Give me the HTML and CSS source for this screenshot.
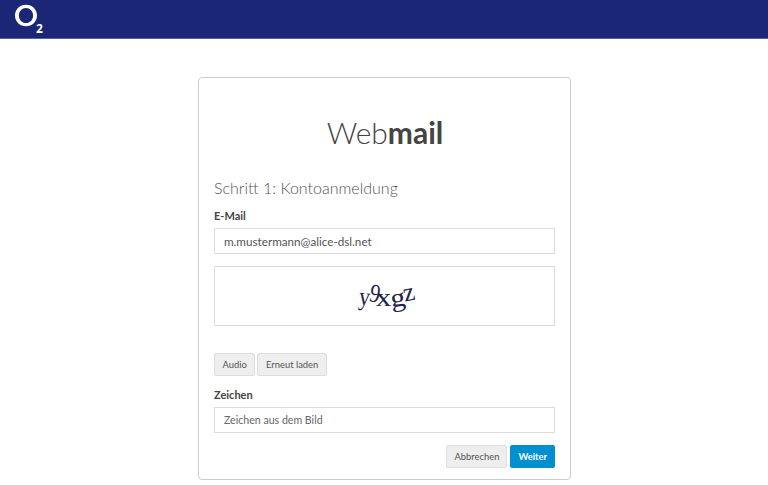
FILE: index.html
```html
<!DOCTYPE html>
<html lang="de">
<head>
<meta charset="utf-8">
<title>Webmail</title>
<link rel="stylesheet" href="styles.css">
</head>
<body>
<header class="topbar">
  <svg class="logo" width="32" height="38" viewBox="0 0 32 38" aria-label="O2">
    <path class="logo-ring" fill-rule="evenodd" d="M12 4.800c6.200 0 11 4.600 11 10.700s-4.800 10.700-11 10.700S1 21.600 1 15.500 5.800 4.800 12 4.800zm0 3.100c-4 0-7.100 3.200-7.100 7.600s3.100 7.600 7.100 7.600 7.100-3.200 7.100-7.600-3.100-7.600-7.100-7.600z"/>
    <text class="logo-2" x="22" y="33">2</text>
  </svg>
</header>
<main class="page">
  <section class="card">
    <h1 class="title">Web<strong>mail</strong></h1>
    <h2 class="step">Schritt 1: Kontoanmeldung</h2>
    <label class="label">E-Mail</label>
    <div class="input">m.mustermann@alice-dsl.net</div>
    <div class="captcha">
      <div class="captcha-text"><span class="c1">y</span><span class="c2">9</span><span class="c3">x</span><span class="c4">g</span><span class="c5">z</span></div>
    </div>
    <div class="captcha-actions">
      <button class="btn wide">Audio</button>
      <button class="btn wide">Erneut laden</button>
    </div>
    <label class="label">Zeichen</label>
    <div class="input placeholder">Zeichen aus dem Bild</div>
    <div class="actions">
      <button class="btn">Abbrechen</button>
      <button class="btn primary">Weiter</button>
    </div>
  </section>
</main>
</body>
</html>
```
FILE: styles.css
```css
* { box-sizing: border-box; }
html, body { margin: 0; padding: 0; }
body {
  background: #fff;
  color: #444;
  font-family: Lato, "Liberation Sans", sans-serif;
  height: 485px;
  overflow: hidden;
}
.topbar {
  height: 39px;
  background: #1c2677;
  border-bottom: 1px solid #5a629c;
  padding-left: 14px;
  display: flex;
  align-items: flex-start;
}
.logo { display: block; }
.logo-ring { fill: #fff; }
.logo-2 {
  fill: #fff;
  font-family: "Open Sans", sans-serif;
  font-weight: 700;
  font-size: 12px;
}
.page { display: flex; justify-content: center; padding-top: 38px; padding-left: 1px; }
.card {
  width: 373px;
  height: 403px;
  border: 1px solid #ccc;
  border-radius: 4px;
  padding: 0 15px;
}
.title {
  margin: 36px 0 0;
  padding-left: 1px;
  text-align: center;
  font-size: 30px;
  line-height: 36px;
  font-weight: 300;
  color: #444;
}
.title strong { font-weight: 700; }
.step {
  margin: 27px 0 9px;
  font-size: 16px;
  line-height: 22px;
  font-weight: 300;
  color: #555;
}
.label {
  display: block;
  margin-top: 8px;
  font-size: 11px;
  line-height: 16px;
  font-weight: 700;
  color: #444;
}
.input {
  margin-top: 4px;
  height: 26px;
  border: 1px solid #ddd;
  padding: 0 9px;
  font-size: 11.7px;
  line-height: 25px;
  color: #555;
}
.placeholder { color: #666; font-size: 10.6px; }
.captcha {
  margin-top: 12px;
  height: 60px;
  border: 1px solid #ddd;
  display: flex;
  align-items: center;
  justify-content: center;
}
.captcha-text {
  display: flex;
  font-family: "Liberation Serif", serif;
  font-size: 26px;
  line-height: 30px;
  color: #23234a;
  transform: translate(2px, 1px);
}
.captcha-text span { display: block; }
.c1 { transform: translate(3px, 0) rotate(6deg) scaleX(.85); }
.c2 { transform: rotate(10deg) translate(0, -3px) scaleX(.8); }
.c3 { transform: translate(-4px, 1px) scaleX(1.2); }
.c4 { transform: rotate(-8deg) translate(-3px, 1px) scaleX(1.15); }
.c5 { transform: rotate(-12deg) translate(-3px, -5px); }
.captcha-actions { margin-top: 27px; display: flex; gap: 2px; }
.captcha-actions + .label { margin-top: 11px; }
.btn {
  font-family: Lato, "Liberation Sans", sans-serif;
  font-size: 9.4px;
  height: 23px;
  padding: 0 7px;
  background: #eee;
  border: 1px solid #ddd;
  border-radius: 2px;
  color: #555;
}
.wide { padding: 0 7.6px; }
.actions { margin-top: 12px; display: flex; justify-content: flex-end; gap: 3px; }
.primary {
  background: #0090d0;
  border-color: #0090d0;
  color: #fff;
  font-weight: 700;
}
```
